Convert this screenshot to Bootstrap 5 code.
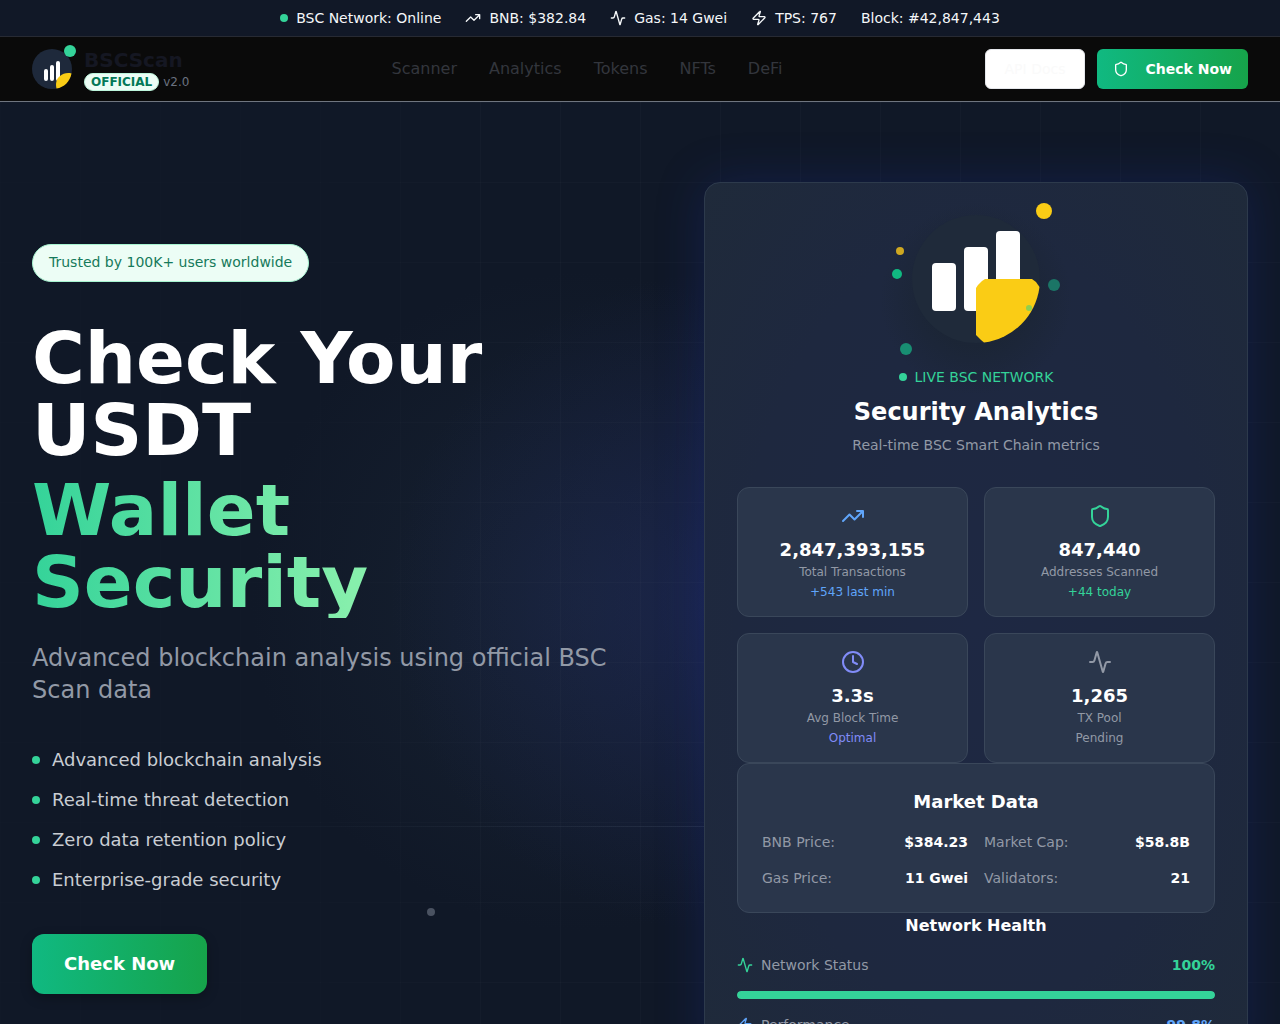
<!DOCTYPE html>
<html lang="en">
<head>
<meta charset="utf-8">
<meta name="viewport" content="width=device-width, initial-scale=1">
<title>BSCScan</title>
<link href="https://cdn.jsdelivr.net/npm/bootstrap@5.3.0/dist/css/bootstrap.min.css" rel="stylesheet">
<style>
body { font-family: "DejaVu Sans", sans-serif; font-size: 16px; line-height: 24px; color: #fff; background: #101827; }
.ico { fill: none; stroke: currentColor; stroke-width: 2; stroke-linecap: round; stroke-linejoin: round; width: 16px; height: 16px; flex: none; }
.ico-lg { width: 24px; height: 24px; }
.t12 { font-size: 12px; line-height: 16px; }
.t14 { font-size: 14px; line-height: 20px; }
.t18 { font-size: 18px; line-height: 28px; }
.t24 { font-size: 24px; line-height: 32px; }
.emerald { color: #34d399; }
.sky { color: #60a5fa; }
.violet { color: #818cf8; }
.muted { color: #9299a6; }
.pulse-dot { width: 8px; height: 8px; border-radius: 50%; background: #34d399; flex: none; }

.status-bar { background: #111827; border-bottom: 1px solid #272a33; color: #f5f7f9; }
.site-header { background: #0a0a0a; border-bottom: 1px solid #6f757f; height: 65px; }
.brand { color: #151722; text-decoration: none; }
.brand-mark { margin-bottom: 4px; }
.brand-name { font-size: 20px; line-height: 26px; }
.official { background: #ecfdf5; border: 1px solid #bdf5dc; color: #047857; border-radius: 9px; padding: 0 6px; }
.version { color: #6b7280; }
.menu-link { color: #33363d; text-decoration: none; line-height: 26px; }
.btn-docs, .btn-scan { height: 40px; border-radius: 6px; padding: 0 16px; }
.btn-docs { background: #fff; color: #fafafa; border: 1px solid #e5e7eb; padding: 0 19px; }
.btn-scan { border: 0; }
.btn-scan, .btn-cta { background: linear-gradient(to right, #10b981, #16a34a); color: #fff; font-weight: 700; }

.hero { position: relative; overflow: hidden; padding: 80px 32px; min-height: calc(100vh - 102px);
  background:
    radial-gradient(circle 330px at 720px 500px, rgba(32, 42, 100, .5), rgba(32, 42, 100, 0)),
    radial-gradient(circle 330px at 580px 500px, rgba(30, 44, 62, .5), rgba(30, 44, 62, 0)),
    #101827; }
.hero-lines { position: absolute; inset: 0;
  background-image: linear-gradient(rgba(255, 255, 255, .02) 1px, transparent 1px), linear-gradient(to right, rgba(255, 255, 255, .02) 1px, transparent 1px);
  background-size: 80px 80px;
  -webkit-mask-image: linear-gradient(to right, rgba(0, 0, 0, .3) 20%, #000 40%);
  mask-image: linear-gradient(to right, rgba(0, 0, 0, .3) 20%, #000 40%); }
.scan-line { position: absolute; top: 724px; left: 16%; width: 39%; height: 1px; background: linear-gradient(to right, transparent, rgba(148, 163, 184, .12)); }
.float-dot { position: absolute; top: 806px; left: calc(33.4% - 1px); width: 8px; height: 8px; border-radius: 50%; background: #4a5261; }
.copy-col { padding: 62px 32px 0 0; }
.panel-col { padding-left: 64px; }
.trust { display: inline-block; background: #ecfdf5; border: 1px solid #a7f3d0; color: #167a5b; border-radius: 19px; padding: 7px 16px 9px; margin-bottom: 40px; line-height: 20px; }
.headline { font-size: 72px; line-height: 72px; font-weight: 700; margin-bottom: 24px; }
.headline .accent { display: block; margin-top: 8px; background: linear-gradient(to right, #34d399, #86efac 55%); -webkit-background-clip: text; background-clip: text; color: transparent; }
.subhead { color: #9299a6; margin-bottom: 40px; }
.features { color: #c9cdd3; gap: 12px; margin-bottom: 40px; }
.btn-cta { height: 60px; border: 0; border-radius: 12px; padding: 0 32px; box-shadow: 0 4px 12px rgba(0, 0, 0, .25); }

.panel { background: #1e293c; background-image: radial-gradient(ellipse at center, #1e2843 0, #1e283f 62%, #1f2a3a 100%); border: 1px solid #2d3a4c; border-radius: 16px; padding: 32px; box-shadow: 0 0 48px rgba(25, 45, 150, .3); }
.emblem { width: 176px; height: 152px; margin: -12px 0 12px; overflow: visible; }
.panel-head { margin-bottom: 32px; }
.panel-title { padding-top: 1px; margin-bottom: 7px; }
.tile { background: #2a364b; border: 1px solid #3a475a; border-radius: 12px; height: 100%; }
.market { padding: 24px; }
.meter { height: 8px; border-radius: 4px; background: #374151; margin: 16px 0; }
.meter .progress-bar { background: #34d399; border-radius: 4px; }
.health-title { line-height: 26px; margin-bottom: 16px; }
</style>
</head>
<body>
<svg class="d-none" aria-hidden="true">
  <symbol id="trend" viewBox="0 0 24 24"><path d="M22 7l-8.5 8.5-5-5L2 17M16 7h6v6"/></symbol>
  <symbol id="activity" viewBox="0 0 24 24"><path d="M22 12h-2.48a2 2 0 0 0-1.93 1.46l-2.35 8.36a.25.25 0 0 1-.48 0L9.24 2.18a.25.25 0 0 0-.48 0l-2.35 8.36A2 2 0 0 1 4.49 12H2"/></symbol>
  <symbol id="zap" viewBox="0 0 24 24"><path d="M4 14a1 1 0 0 1-.78-1.63l9.9-10.2a.5.5 0 0 1 .86.46l-1.92 6.02A1 1 0 0 0 13 10h7a1 1 0 0 1 .78 1.63l-9.9 10.2a.5.5 0 0 1-.86-.46l1.92-6.02A1 1 0 0 0 11 14z"/></symbol>
  <symbol id="shield" viewBox="0 0 24 24"><path d="M20 13c0 5-3.5 7.5-7.66 8.95a1 1 0 0 1-.67-.01C7.5 20.5 4 18 4 13V6a1 1 0 0 1 1-1c2 0 4.5-1.2 6.24-2.72a1.17 1.17 0 0 1 1.52 0C14.51 3.81 17 5 19 5a1 1 0 0 1 1 1z"/></symbol>
  <symbol id="clock" viewBox="0 0 24 24"><circle cx="12" cy="12" r="10"/><path d="M12 6v6l4 2"/></symbol>
</svg>

<div class="status-bar t14 d-flex flex-wrap justify-content-center gap-4 py-2">
  <div class="d-flex align-items-center gap-2"><span class="pulse-dot"></span><span>BSC Network: Online</span></div>
  <div class="d-flex align-items-center gap-2"><svg class="ico"><use href="#trend"/></svg><span>BNB: $382.84</span></div>
  <div class="d-flex align-items-center gap-2"><svg class="ico"><use href="#activity"/></svg><span>Gas: 14 Gwei</span></div>
  <div class="d-flex align-items-center gap-2"><svg class="ico"><use href="#zap"/></svg><span>TPS: 767</span></div>
  <div>Block: #42,847,443</div>
</div>

<header class="site-header d-flex align-items-center justify-content-between px-4">
  <a href="#" class="brand d-flex align-items-center gap-2 ms-2">
    <svg class="brand-mark" width="44" height="44" viewBox="0 0 44 44" aria-hidden="true">
      <circle cx="20" cy="24" r="20" fill="#1e293b"/>
      <rect x="12" y="24" width="4" height="12" rx="2" fill="#fff"/>
      <rect x="18" y="20" width="4" height="16" rx="2" fill="#fff"/>
      <rect x="24" y="16" width="4" height="20" rx="2" fill="#fff"/>
      <path d="M24.500 43.500C23.500 39 24 34 28 31 31 28.500 35 27.500 39.500 28.500 38 36.500 32 42.500 24.500 43.500Z" fill="#facc15"/>
      <circle cx="38" cy="6" r="6" fill="#34d399"/>
    </svg>
    <span class="d-flex flex-column">
      <span class="brand-name fw-bold">BSCScan</span>
      <span class="d-flex align-items-center gap-1 t12"><span class="official fw-bold">OFFICIAL</span><span class="version">v2.0</span></span>
    </span>
  </a>
  <nav class="d-flex" aria-label="Main">
    <a class="menu-link px-3" href="#">Scanner</a>
    <a class="menu-link px-3" href="#">Analytics</a>
    <a class="menu-link px-3" href="#">Tokens</a>
    <a class="menu-link px-3" href="#">NFTs</a>
    <a class="menu-link px-3" href="#">DeFi</a>
  </nav>
  <div class="d-flex me-2">
    <button type="button" class="btn-docs t14 me-2">API Docs</button>
    <button type="button" class="btn-scan t14 d-flex align-items-center gap-3 ms-1"><svg class="ico"><use href="#shield"/></svg>Check Now</button>
  </div>
</header>

<main class="hero">
  <div class="hero-lines"></div>
  <div class="scan-line"></div>
  <div class="float-dot"></div>
  <div class="row g-0 position-relative">
    <section class="col-6 copy-col">
      <div class="trust t14">Trusted by 100K+ users worldwide</div>
      <h1 class="headline">Check Your USDT <span class="accent">Wallet Security</span></h1>
      <p class="subhead t24">Advanced blockchain analysis using official BSC Scan data</p>
      <ul class="features list-unstyled d-flex flex-column t18">
        <li class="d-flex align-items-center"><span class="pulse-dot me-2"></span><span class="ms-1">Advanced blockchain analysis</span></li>
        <li class="d-flex align-items-center"><span class="pulse-dot me-2"></span><span class="ms-1">Real-time threat detection</span></li>
        <li class="d-flex align-items-center"><span class="pulse-dot me-2"></span><span class="ms-1">Zero data retention policy</span></li>
        <li class="d-flex align-items-center"><span class="pulse-dot me-2"></span><span class="ms-1">Enterprise-grade security</span></li>
      </ul>
      <button type="button" class="btn-cta t18">Check Now</button>
    </section>

    <section class="col-6 panel-col">
      <div class="panel">
        <div class="panel-head d-flex flex-column align-items-center text-center">
          <svg class="emblem" viewBox="-88 -76 176 152" aria-hidden="true">
            <defs>
              <radialGradient id="halo"><stop offset=".5" stop-color="#19232e" stop-opacity=".55"/><stop offset="1" stop-color="#19232e" stop-opacity="0"/></radialGradient>
            </defs>
            <circle cx="0" cy="20" r="96" fill="url(#halo)"/>
            <circle r="64" fill="#1f2a3a"/>
            <rect x="-44" y="-16" width="24" height="48" rx="4" fill="#fff"/>
            <rect x="-12" y="-32" width="24" height="64" rx="4" fill="#fff"/>
            <rect x="20" y="-48" width="24" height="80" rx="4" fill="#fff"/>
            <path d="M0 9L2 6 6 2 9 0H56L60 3 63.500 8A64 64 0 0 1 8 63.500L5 61 0 56Z" fill="#facc15"/>
            <circle cx="53" cy="29" r="3" fill="#8fcf4f"/>
            <circle cx="68" cy="-68" r="8" fill="#facc15"/>
            <circle cx="-76" cy="-28" r="4" fill="#cfa821"/>
            <circle cx="-79" cy="-5" r="5" fill="#10b981"/>
            <circle cx="78" cy="6" r="6" fill="#1b7566"/>
            <circle cx="-70" cy="70" r="6" fill="#188e72"/>
          </svg>
          <div class="d-flex align-items-center gap-2 t14 emerald mb-2"><span class="pulse-dot"></span>LIVE BSC NETWORK</div>
          <h2 class="panel-title t24 fw-bold">Security Analytics</h2>
          <p class="t14 muted mb-0">Real-time BSC Smart Chain metrics</p>
        </div>

        <div class="row g-3 text-center">
          <div class="col-6"><div class="tile p-3">
            <svg class="ico ico-lg sky d-block mx-auto mb-2"><use href="#trend"/></svg>
            <div class="t18 fw-bold">2,847,393,155</div><div class="t12 muted mb-1">Total Transactions</div><div class="t12 sky">+543 last min</div>
          </div></div>
          <div class="col-6"><div class="tile p-3">
            <svg class="ico ico-lg emerald d-block mx-auto mb-2"><use href="#shield"/></svg>
            <div class="t18 fw-bold">847,440</div><div class="t12 muted mb-1">Addresses Scanned</div><div class="t12 emerald">+44 today</div>
          </div></div>
          <div class="col-6"><div class="tile p-3">
            <svg class="ico ico-lg violet d-block mx-auto mb-2"><use href="#clock"/></svg>
            <div class="t18 fw-bold">3.3s</div><div class="t12 muted mb-1">Avg Block Time</div><div class="t12 violet">Optimal</div>
          </div></div>
          <div class="col-6"><div class="tile p-3">
            <svg class="ico ico-lg muted d-block mx-auto mb-2"><use href="#activity"/></svg>
            <div class="t18 fw-bold">1,265</div><div class="t12 muted mb-1">TX Pool</div><div class="t12 muted">Pending</div>
          </div></div>
        </div>

        <div class="tile market h-auto">
          <h3 class="t18 fw-bold text-center mb-3">Market Data</h3>
          <div class="row g-3 t14">
            <div class="col-6 d-flex justify-content-between"><span class="muted">BNB Price:</span><b>$384.23</b></div>
            <div class="col-6 d-flex justify-content-between"><span class="muted">Market Cap:</span><b>$58.8B</b></div>
            <div class="col-6 d-flex justify-content-between"><span class="muted">Gas Price:</span><b>11 Gwei</b></div>
            <div class="col-6 d-flex justify-content-between"><span class="muted">Validators:</span><b>21</b></div>
          </div>
        </div>

        <h3 class="health-title fs-6 fw-bold text-center">Network Health</h3>
        <div class="d-flex align-items-center gap-2 t14"><svg class="ico emerald"><use href="#activity"/></svg><span class="muted">Network Status</span><b class="emerald ms-auto">100%</b></div>
        <div class="progress meter"><div class="progress-bar" style="width:100%"></div></div>
        <div class="d-flex align-items-center gap-2 t14"><svg class="ico sky"><use href="#zap"/></svg><span class="muted">Performance</span><b class="sky ms-auto">99.8%</b></div>
      </div>
    </section>
  </div>
</main>
<script src="https://cdn.jsdelivr.net/npm/bootstrap@5.3.0/dist/js/bootstrap.bundle.min.js"></script>
</body>
</html>
